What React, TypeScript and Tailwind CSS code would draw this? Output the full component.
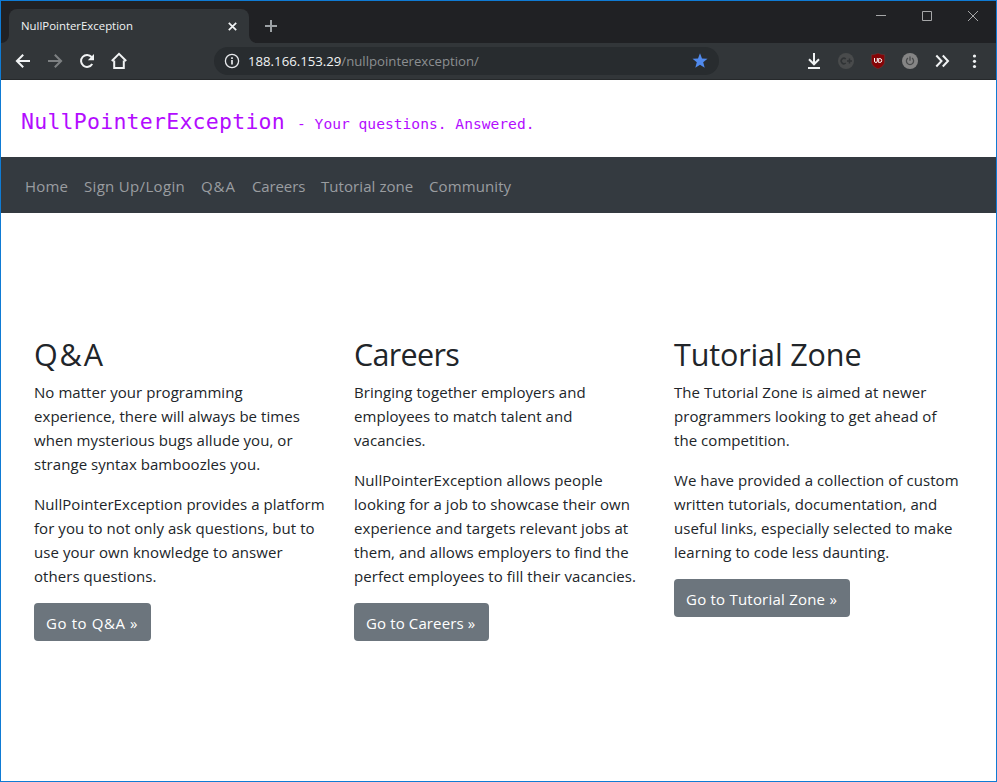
import React from "react";

const navLinks = [
  { label: "Home", style: "w-[43px] tracking-[0.2px]" },
  { label: "Sign Up/Login", style: "w-[101px] tracking-[0.32px]" },
  { label: "Q&A", style: "w-[35px] tracking-[0.9px]" },
  { label: "Careers", style: "w-[53px] tracking-[-0.12px]" },
  { label: "Tutorial zone", style: "w-[92px] tracking-[0.07px]" },
  { label: "Community", style: "w-[82px] tracking-[0.1px]" },
];

const columns = [
  {
    title: "Q&A",
    titleStyle: "tracking-[1.9px]",
    paragraphs: [
      ["No matter your programming", "experience, there will always be times", "when mysterious bugs allude you, or", "strange syntax bamboozles you."],
      ["NullPointerException provides a platform", "for you to not only ask questions, but to", "use your own knowledge to answer", "others questions."],
    ],
    button: "Go to Q&A »",
    buttonStyle: "w-[117px] tracking-[0.6px]",
  },
  {
    title: "Careers",
    titleStyle: "tracking-[-0.7px]",
    paragraphs: [
      ["Bringing together employers and", "employees to match talent and", "vacancies."],
      ["NullPointerException allows people", "looking for a job to showcase their own", "experience and targets relevant jobs at", "them, and allows employers to find the", "perfect employees to fill their vacancies."],
    ],
    button: "Go to Careers »",
    buttonStyle: "w-[135px] tracking-[0.12px]",
  },
  {
    title: "Tutorial Zone",
    titleStyle: "tracking-[-0.13px]",
    paragraphs: [
      ["The Tutorial Zone is aimed at newer", "programmers looking to get ahead of", "the competition."],
      ["We have provided a collection of custom", "written tutorials, documentation, and", "useful links, especially selected to make", "learning to code less daunting."],
    ],
    button: "Go to Tutorial Zone »",
    buttonStyle: "w-[176px] tracking-[0.22px]",
  },
];

function TabStrip() {
  return (
    <div className="flex h-[42px] items-end bg-[#202124]">
      <svg className="h-2 w-2 shrink-0" viewBox="0 0 8 8">
        <path d="M8 0v8H0a8 8 0 0 0 8-8z" fill="#323639" />
      </svg>
      <div className="flex h-[34px] w-[240px] items-center justify-between rounded-t-lg bg-[#323639] pr-[12px] pl-3">
        <span className="text-[11.4px] whitespace-nowrap text-[#f1f3f4]">NullPointerException</span>
        <svg className="h-[9px] w-[9px]" viewBox="0 0 9 9">
          <path d="M.8.8l7.4 7.4M8.2.8L.8 8.2" stroke="#f1f3f4" strokeWidth="1.7" />
        </svg>
      </div>
      <svg className="h-2 w-2 shrink-0" viewBox="0 0 8 8">
        <path d="M0 0v8h8a8 8 0 0 1-8-8z" fill="#323639" />
      </svg>
      <svg className="mb-[11px] ml-2 h-3 w-3" viewBox="0 0 12 12">
        <path d="M6 0v12M0 6h12" stroke="#9da2a5" strokeWidth="2" />
      </svg>
      <div className="mr-[18px] mb-[22px] ml-auto flex items-center gap-9">
        <svg className="h-[10px] w-[10px]" viewBox="0 0 10 10">
          <path d="M0 4.5h10" stroke="#a6a7a8" />
        </svg>
        <svg className="h-[10px] w-[10px]" viewBox="0 0 10 10">
          <path d="M.5.5h9v9h-9z" stroke="#a6a7a8" fill="none" />
        </svg>
        <svg className="h-[10px] w-[10px]" viewBox="0 0 10 10">
          <path d="M0 0l10 10M10 0L0 10" stroke="#a6a7a8" />
        </svg>
      </div>
    </div>
  );
}

function Toolbar() {
  return (
    <div className="flex h-[37px] items-center border-b border-[#26292b] bg-[#323639] pl-[14px]">
      <svg className="h-4 w-4" viewBox="0 0 16 16" fill="none" stroke="#f1f3f4" strokeWidth="2">
        <path d="M15 8H2M8.2 1.7L1.9 8l6.3 6.3" />
      </svg>
      <svg className="ml-4 h-4 w-4" viewBox="0 0 16 16" fill="none" stroke="#7d8082" strokeWidth="2">
        <path d="M1 8h13M7.8 1.7L14.1 8l-6.3 6.3" />
      </svg>
      <svg className="ml-4 h-4 w-4" viewBox="0 0 16 16">
        <path d="M13.2 11A6 6 0 1 1 12.6 4" fill="none" stroke="#f1f3f4" strokeWidth="2" />
        <path d="M15 1v6.2H8.8z" fill="#f1f3f4" />
      </svg>
      <svg className="ml-4 h-[18px] w-4" viewBox="0 0 16 18">
        <path d="M3.2 8.5V16h9.6V8.5M.8 9L8 1.9 15.2 9" fill="none" stroke="#f1f3f4" strokeWidth="2" />
      </svg>
      <div className="ml-[87px] flex h-7 w-[505px] items-center rounded-full bg-[#282c2f] pl-[10px]">
        <svg className="h-4 w-4 shrink-0" viewBox="0 0 16 16">
          <circle cx="8" cy="8" r="6.6" fill="none" stroke="#e8eaed" strokeWidth="1.3" />
          <path d="M8 7v4.5M8 4.2v1.7" stroke="#e8eaed" strokeWidth="1.7" />
        </svg>
        <span className="ml-2 pt-0.5 text-[13.2px] whitespace-nowrap text-[#8c8f91]">
          <span className="text-[#f1f3f4]">188.166.153.29</span>
          <span>/nullpointerexception/</span>
        </span>
        <svg className="mr-[11px] ml-auto h-4 w-4" viewBox="0 0 16 16">
          <path d="M8 .3l2 5.3 5.5.2-4.3 3.5 1.5 5.5L8 11.7l-4.7 3.1 1.5-5.5L.5 5.8 6 5.6z" fill="#5089ec" />
        </svg>
      </div>
      <div className="ml-auto flex items-center gap-4 pr-[14px]">
        <svg className="h-4 w-4" viewBox="0 0 16 16" fill="none" stroke="#f1f3f4" strokeWidth="2">
          <path d="M8 0v11M3 6.3l5 5 5-5M2 15h12" />
        </svg>
        <svg className="h-4 w-4" viewBox="0 0 16 16">
          <circle cx="8" cy="8" r="8" fill="#494b4c" />
          <path d="M7.7 6a2.7 2.7 0 1 0 0 4M9 8h5M11.5 5.5v5" fill="none" stroke="#303335" strokeWidth="1.5" />
        </svg>
        <svg className="h-4 w-4" viewBox="0 0 16 16">
          <path d="M8 0c2 1.2 4 1.7 6.7 1.7V8c0 4-2.6 6-6.7 8-4.1-2-6.7-4-6.7-8V1.7C4 1.7 6 1.200 8 0z" fill="#850507" stroke="#5d4b4c" strokeWidth=".5" />
          <path d="M4.500 5v3q0 1.500 1.400 1.500T7.300 8V5M8.700 5.500v4h1q2 0 2-2t-2-2z" fill="none" stroke="#fff" strokeWidth="1" />
        </svg>
        <svg className="h-4 w-4" viewBox="0 0 16 16">
          <circle cx="8" cy="8" r="8" fill="#858585" />
          <path d="M6 5a3.600 3.600 0 1 0 4 0M8 3.500v4.300" fill="none" stroke="#494b4c" strokeWidth="1.300" />
        </svg>
        <svg className="h-4 w-4" viewBox="0 0 16 16" fill="none" stroke="#f1f3f4" strokeWidth="2">
          <path d="M2.300 2.500L7.500 8l-5.200 5.500M8.800 2.500L14 8l-5.200 5.500" />
        </svg>
        <svg className="h-4 w-4" viewBox="0 0 16 16" fill="#f1f3f4">
          <circle cx="8.500" cy="3" r="1.600" />
          <circle cx="8.500" cy="8.300" r="1.600" />
          <circle cx="8.500" cy="13.500" r="1.600" />
        </svg>
      </div>
    </div>
  );
}

export default function App() {
  return (
    <div className="flex h-[782px] w-[997px] flex-col overflow-hidden border border-[#0f7bd4] bg-white font-['Open_Sans','Noto_Sans',sans-serif] text-[#212529]">
      <TabStrip />
      <Toolbar />
      <header className="flex h-[77px] items-baseline pt-[26px] pl-5 font-['DejaVu_Sans_Mono',monospace] whitespace-pre text-[#b30cff]">
        <h1 className="w-[268px] text-[21.5px] leading-8 tracking-[0.256px]">NullPointerException</h1>
        <p className="pl-2 text-[14.6px] leading-6 tracking-[0.01px]">- Your questions. Answered.</p>
      </header>
      <nav className="flex h-14 shrink-0 items-center gap-4 bg-[#343a40] pl-6 text-[15px] text-[#9a9da0]">
        {navLinks.map((link) => (
          <a key={link.label} className={`${link.style} pt-0.5 whitespace-nowrap`}>
            {link.label}
          </a>
        ))}
      </nav>
      <main className="grid grid-cols-[320px_320px_320px] pt-[122px] pl-[18px]">
        {columns.map((column) => (
          <section key={column.title} className="px-[15px]">
            <h2 className={`${column.titleStyle} mb-[7px] text-[30.5px] leading-[38px] whitespace-nowrap`}>{column.title}</h2>
            {column.paragraphs.map((lines) => (
              <p key={lines[0]} className="mb-4 text-[15px] leading-6 tracking-[0.055px]">
                {lines.map((line) => (
                  <span key={line} className="block whitespace-nowrap">{line}</span>
                ))}
              </p>
            ))}
            <a className={`${column.buttonStyle} -mt-px flex h-[38px] items-center rounded bg-[#6c757d] pt-0.5 pl-3 text-[15px] whitespace-nowrap text-white`}>
              {column.button}
            </a>
          </section>
        ))}
      </main>
    </div>
  );
}
